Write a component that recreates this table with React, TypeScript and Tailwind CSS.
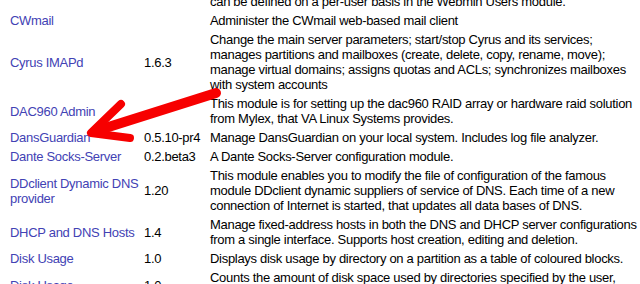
import type React from "react";

type Module = {
  name: React.ReactNode;
  version: string;
  lines: string[];
};

const modules: Module[] = [
  {
    name: "CWmail",
    version: "",
    lines: ["Administer the CWmail web-based mail client"],
  },
  {
    name: "Cyrus IMAPd",
    version: "1.6.3",
    lines: [
      "Change the main server parameters; start/stop Cyrus and its services;",
      "manages partitions and mailboxes (create, delete, copy, rename, move);",
      "manage virtual domains; assigns quotas and ACLs; synchronizes mailboxes",
      "with system accounts",
    ],
  },
  {
    name: "DAC960 Admin",
    version: "",
    lines: [
      "This module is for setting up the dac960 RAID array or hardware raid solution",
      "from Mylex, that VA Linux Systems provides.",
    ],
  },
  {
    name: "DansGuardian",
    version: "0.5.10-pr4",
    lines: ["Manage DansGuardian on your local system. Includes log file analyzer."],
  },
  {
    name: "Dante Socks-Server",
    version: "0.2.beta3",
    lines: ["A Dante Socks-Server configuration module."],
  },
  {
    name: (
      <>
        DDclient Dynamic DNS
        <br />
        provider
      </>
    ),
    version: "1.20",
    lines: [
      "This module enables you to modify the file of configuration of the famous",
      "module DDclient dynamic suppliers of service of DNS. Each time of a new",
      "connection of Internet is started, that updates all data bases of DNS.",
    ],
  },
  {
    name: "DHCP and DNS Hosts",
    version: "1.4",
    lines: [
      "Manage fixed-address hosts in both the DNS and DHCP server configurations",
      "from a single interface. Supports host creation, editing and deletion.",
    ],
  },
  {
    name: "Disk Usage",
    version: "1.0",
    lines: ["Displays disk usage by directory on a partition as a table of coloured blocks."],
  },
  {
    name: "Disk Usage",
    version: "1.0",
    lines: [
      "Counts the amount of disk space used by directories specified by the user,",
      "and shows the results in a sortable table.",
    ],
  },
];

const Desc: React.FC<{ lines: string[] }> = ({ lines }) => (
  <>
    {lines.map((l, i) => (
      <span key={i}>
        {i > 0 && <br />}
        {l}
      </span>
    ))}
  </>
);

export default function App() {
  return (
    <div className="relative w-[640px] h-[284px] overflow-hidden bg-white text-black font-['Liberation_Sans',Arial,sans-serif] text-[13px] leading-[15px] tracking-[-0.3px]">
      <table className="table-fixed w-[700px] border-separate border-spacing-[2px] ml-[7px] mt-[-9px]">
        <colgroup>
          <col className="w-[132px]" />
          <col className="w-[64px]" />
          <col />
        </colgroup>
        <tbody>
          <tr>
            <td className="p-[1px]"></td>
            <td className="p-[1px]"></td>
            <td className="p-[1px] whitespace-nowrap">
              can be defined on a per-user basis in the Webmin Users module.
            </td>
          </tr>
          {modules.map((m, i) => (
            <tr key={i}>
              <td className="p-[1px] align-middle whitespace-nowrap">
                <a href="#" className="text-[#4242b4] no-underline">
                  {m.name}
                </a>
              </td>
              <td className="p-[1px] align-middle whitespace-nowrap">{m.version}</td>
              <td className="p-[1px] align-middle whitespace-nowrap">
                <Desc lines={m.lines} />
              </td>
            </tr>
          ))}
        </tbody>
      </table>

      {/* red arrow drawn over the list */}
      <svg
        className="absolute left-0 top-0 pointer-events-none"
        width="640"
        height="284"
        viewBox="0 0 640 284"
      >
        <path
          d="M216 93 L99 130"
          stroke="#f70000"
          strokeWidth="10"
          strokeLinecap="round"
          fill="none"
        />
        <path
          d="M121 104 L91 133 L130 138"
          stroke="#f70000"
          strokeWidth="8"
          strokeLinecap="round"
          strokeLinejoin="round"
          fill="none"
        />
      </svg>
    </div>
  );
}
